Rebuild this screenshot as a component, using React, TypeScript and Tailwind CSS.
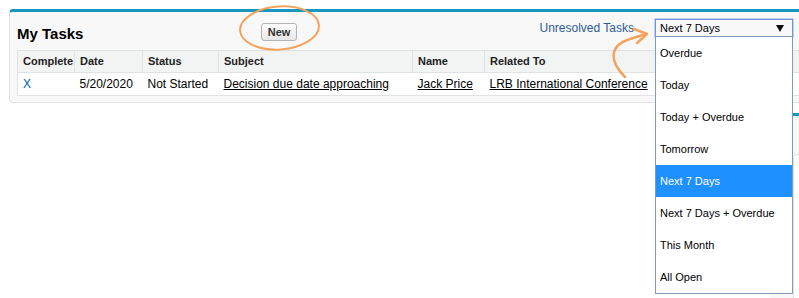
import React from "react";

const options = [
  "Overdue",
  "Today",
  "Today + Overdue",
  "Tomorrow",
  "Next 7 Days",
  "Next 7 Days + Overdue",
  "This Month",
  "All Open",
];

export default function App() {
  return (
    <div
      className="relative w-[799px] h-[298px] overflow-hidden bg-white text-black"
      style={{ fontFamily: '"Liberation Sans", Arial, sans-serif' }}
    >
      <div className="pt-[9px] pl-[9px]">
        {/* My Tasks panel */}
        <div className="w-[810px] rounded-[4px] border border-[#e0e3e5] border-t-[3px] border-t-[#1797c0] bg-[#f8f8f8] px-[7px] pb-[6px]">
          <div className="flex h-[38px] items-start">
            <div className="w-[244px] pt-[13px] text-[15px] leading-[18px] font-bold">My Tasks</div>
            <div className="pt-[7px]">
              <button className="h-[18px] w-[36px] rounded-[3px] border border-[#b5b5b5] bg-gradient-to-b from-white to-[#e6e6e6] text-[11px] font-bold leading-[16px] text-[#333]">
                New
              </button>
            </div>
            <div className="ml-auto mr-[18px] flex items-center gap-[21px] pt-[7px]">
              <span className="text-[12px] leading-[18px] text-[#2c5d95]">Unresolved Tasks</span>
              <div className="flex h-[18px] w-[138px] items-center justify-between border border-[#6f95d8] pl-[4px] pr-[8px] text-[11px] leading-[14px] shadow-[0_0_0_1px_#c2d3f0]">
                <span>Next 7 Days</span>
                <svg width="8" height="7" viewBox="0 0 8 7">
                  <path d="M0 0 H8 L4 7 Z" fill="#111" />
                </svg>
              </div>
            </div>
          </div>
          <table className="w-full table-fixed border-collapse bg-white text-left">
            <colgroup>
              <col className="w-[57px]" />
              <col className="w-[68px]" />
              <col className="w-[76px]" />
              <col className="w-[194px]" />
              <col className="w-[72px]" />
              <col />
            </colgroup>
            <thead>
              <tr className="h-[22px] bg-[#f2f3f3] text-[11px] font-bold text-[#222]">
                <th className="border border-[#e0e3e5] pl-[5px] font-bold">Complete</th>
                <th className="border border-[#e0e3e5] pl-[5px] font-bold">Date</th>
                <th className="border border-[#e0e3e5] pl-[5px] font-bold">Status</th>
                <th className="border border-[#e0e3e5] pl-[5px] font-bold">Subject</th>
                <th className="border border-[#e0e3e5] pl-[5px] font-bold">Name</th>
                <th className="border border-[#e0e3e5] pl-[5px] font-bold">Related To</th>
              </tr>
            </thead>
            <tbody>
              <tr className="h-[23px] text-[12px]">
                <td className="border-y border-l border-[#e0e3e5] pl-[5px] text-[#015ba7]">X</td>
                <td className="border-y border-[#e0e3e5] pl-[5px]">5/20/2020</td>
                <td className="border-y border-[#e0e3e5] pl-[5px]">Not Started</td>
                <td className="border-y border-[#e0e3e5] pl-[5px]">
                  <span className="underline">Decision due date approaching</span>
                </td>
                <td className="border-y border-[#e0e3e5] pl-[5px]">
                  <span className="underline">Jack Price</span>
                </td>
                <td className="border-y border-r border-[#e0e3e5] pl-[5px]">
                  <span className="underline whitespace-nowrap">LRB International Conference</span>
                </td>
              </tr>
            </tbody>
          </table>
        </div>

        {/* second panel (mostly hidden) */}
        <div className="mt-[10px] ml-[761px] h-[200px] w-[60px] border-t-[3px] border-r border-[#e0e3e5] border-t-[#1797c0] bg-[#f8f8f8] pt-[38px] pl-[23px]">
          <div className="h-[150px] rounded-tl-[4px] border border-[#e0e3e5] bg-white" />
        </div>
      </div>

      {/* open dropdown list */}
      <div className="absolute left-[655px] top-[36px] w-[138px] border border-[#7f9db9] bg-white">
        {options.map((o) => (
          <div
            key={o}
            className={
              o === "Next 7 Days"
                ? "flex h-[32px] items-center bg-[#1e90ff] pl-[4px] text-[11px] text-white"
                : "flex h-[32px] items-center pl-[4px] text-[11px] text-black"
            }
          >
            {o}
          </div>
        ))}
      </div>

      {/* annotations */}
      <svg className="pointer-events-none absolute left-0 top-0" width="799" height="298">
        <ellipse
          cx="279.5"
          cy="28"
          rx="39.5"
          ry="21.5"
          fill="none"
          stroke="#f4a35c"
          strokeWidth="2"
          transform="rotate(-4 279.5 28)"
        />
        <path
          d="M625 77 C 610 62, 608 46, 630 39 L 646 34"
          fill="none"
          stroke="#f4a35c"
          strokeWidth="2.5"
          strokeLinecap="round"
        />
        <path
          d="M634 29 L 647 34 L 637 43"
          fill="none"
          stroke="#f4a35c"
          strokeWidth="2.5"
          strokeLinecap="round"
          strokeLinejoin="round"
        />
      </svg>
    </div>
  );
}
